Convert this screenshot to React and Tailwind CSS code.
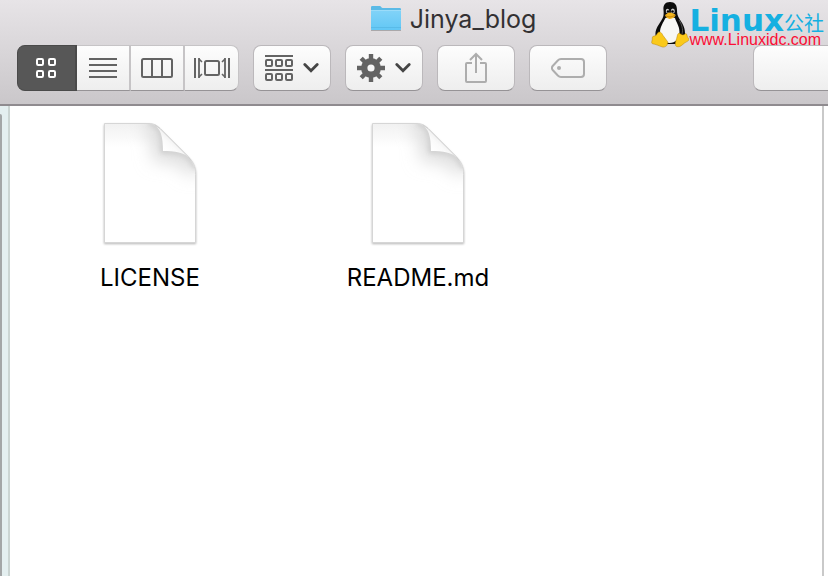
import { useState } from "react";
import clsx from "clsx";

const files = ["LICENSE", "README.md"];

const GridIcon = () => (
  <svg width="22" height="22" viewBox="0 0 22 22" fill="none" stroke="currentColor" strokeWidth="2">
    <rect x="1" y="2" width="6" height="6" rx="1.2" />
    <rect x="13" y="2" width="6" height="6" rx="1.2" />
    <rect x="1" y="14" width="6" height="6" rx="1.2" />
    <rect x="13" y="14" width="6" height="6" rx="1.2" />
  </svg>
);

const ListIcon = () => (
  <svg width="28" height="20" viewBox="0 0 28 20" fill="currentColor">
    <path d="M0 0h28v2H0zM0 6h28v2H0zM0 12h28v2H0zM0 18h28v2H0z" />
  </svg>
);

const ColumnsIcon = () => (
  <svg width="32" height="20" viewBox="0 0 32 20" fill="none" stroke="currentColor" strokeWidth="2">
    <rect x="1" y="1" width="30" height="18" rx="1.5" />
    <path d="M11 1v18M21 1v18" />
  </svg>
);

const CoverFlowIcon = () => (
  <svg width="36" height="20" viewBox="0 0 36 20" fill="none" stroke="currentColor" strokeWidth="2">
    <path d="M1 0v20M35 0v20" />
    <path d="M5 0v20M31 0v20" strokeWidth="1.800" />
    <path d="M5 1l3 3M5 19l3-3M31 1l-3 3M31 19l-3-3" strokeWidth="1.600" />
    <rect x="11" y="3" width="14" height="14" rx="1.5" />
  </svg>
);

const ArrangeIcon = () => (
  <svg width="28" height="26" viewBox="0 0 28 26" fill="none" stroke="currentColor" strokeWidth="2">
    <path d="M0 1h28M0 15h28" />
    <rect x="1" y="5" width="6" height="6" rx="1" />
    <rect x="11" y="5" width="6" height="6" rx="1" />
    <rect x="21" y="5" width="6" height="6" rx="1" />
    <rect x="1" y="19" width="6" height="6" rx="1" />
    <rect x="11" y="19" width="6" height="6" rx="1" />
    <rect x="21" y="19" width="6" height="6" rx="1" />
  </svg>
);

const GearIcon = () => (
  <svg width="28" height="28" viewBox="0 0 28 28">
    <g stroke="currentColor" strokeWidth="4.4">
      <path d="M14 0v9M14 19v9M0 14h9M19 14h9" />
      <path d="M4.2 4.2l6 6M17.8 17.8l6 6M23.8 4.2l-6 6M10.2 17.8l-6 6" />
    </g>
    <circle cx="14" cy="14" r="6.8" fill="none" stroke="currentColor" strokeWidth="6.4" />
  </svg>
);

const ChevronIcon = () => (
  <svg width="16" height="10" viewBox="0 0 16 10" fill="none" stroke="#454545" strokeWidth="2.8">
    <path d="M1.8 1.6L8 7.8l6.200-6.200" strokeLinecap="round" strokeLinejoin="miter" />
  </svg>
);

const ShareIcon = () => (
  <svg width="24" height="32" viewBox="0 0 24 32" fill="none" stroke="#adadad" strokeWidth="2">
    <path d="M8 11H3a1 1 0 0 0-1 1v17a1 1 0 0 0 1 1h18a1 1 0 0 0 1-1V12a1 1 0 0 0-1-1h-5" />
    <path d="M12 21V2M6 8l6-6 6 6" />
  </svg>
);

const TagIcon = () => (
  <svg width="34" height="20" viewBox="0 0 34 20" fill="none" stroke="#adadad" strokeWidth="2">
    <path d="M10 1h20a3 3 0 0 1 3 3v12a3 3 0 0 1-3 3H10c-1.500 0-2.300-.6-3.200-1.500L1.700 12c-1-1.200-1-2.800 0-4L6.800 2.500C7.700 1.500 8.500 1 10 1z" />
    <circle cx="8" cy="10" r="2" fill="#adadad" stroke="none" />
  </svg>
);

const FolderIcon = () => (
  <svg width="32" height="28" viewBox="0 0 32 28">
    <defs>
      <linearGradient id="folder" x1="0" y1="0" x2="0" y2="1">
        <stop offset="0" stopColor="#82d3f8" />
        <stop offset="1" stopColor="#62c7f5" />
      </linearGradient>
    </defs>
    <path d="M1 25h30v1H1z" fill="#aaa8aa" />
    <path d="M1 2.200Q1 1 2.200 1h7.600c1.200 0 1.600 2 3 2h17q1.200 0 1.200 1.200V24.500H1z" fill="#5bbae6" />
    <path d="M1 5h30v19q0 1-1 1H2q-1 0-1-1z" fill="url(#folder)" />
    <path d="M1 5.500h30" stroke="#9bdcf9" />
    <path d="M1 22.500h30" stroke="#50b2df" strokeWidth="0.600" />
  </svg>
);

const DocumentIcon = () => (
  <svg width="100" height="128" viewBox="0 0 100 128">
    <defs>
      <linearGradient id="top" x1="0" y1="0" x2="0" y2="1">
        <stop offset="0" stopColor="#f1f1f1" />
        <stop offset="0.2" stopColor="#ffffff" />
      </linearGradient>
      <linearGradient id="curl" x1="64" y1="31" x2="74" y2="20" gradientUnits="userSpaceOnUse">
        <stop offset="0" stopColor="#ffffff" />
        <stop offset="0.6" stopColor="#fafafa" />
        <stop offset="1" stopColor="#efefef" />
      </linearGradient>
      <clipPath id="page">
        <path d="M5 4h43c6 0 9 2 12 5l28 28c5 5 7 10 7 18v67H5z" />
      </clipPath>
      <filter id="soft" x="-10%" y="-10%" width="120%" height="120%">
        <feGaussianBlur stdDeviation="0.9" />
      </filter>
      <filter id="softest" x="-60%" y="-60%" width="220%" height="220%">
        <feGaussianBlur stdDeviation="9" />
      </filter>
      <filter id="softer" x="-40%" y="-40%" width="180%" height="180%">
        <feGaussianBlur stdDeviation="2.500" />
      </filter>
    </defs>
    <path d="M4.500 5H48c6 0 9 2 12 5l28 28c5 5 7.500 10 7.500 18v67.500h-91z" fill="#c4c4c4" stroke="#a8a8a8" filter="url(#soft)" />
    <path d="M4.500 3.500H48c6 0 9 2 12 5l28 28c5 5 7.500 10 7.500 18v68h-91z" fill="url(#top)" stroke="#d6d6d6" />
    <g clipPath="url(#page)" fill="none">
      <path d="M46 3C58 4 62 14 62 32c18 0 29 5 34 20" stroke="#dadada" strokeWidth="18" filter="url(#softest)" />
      <path d="M49 3C60 5 63 14 63 31c18 0 27 4 33 18" stroke="#cacaca" strokeWidth="4" filter="url(#softer)" />
    </g>
    <path d="M53 4.500C61 8 63 17 63 31c12 0 21 1 28 8L60 8.500z" fill="url(#curl)" />
    <path d="M55 5l5 3.500 28 28 3 4" fill="none" stroke="#d0d0d0" />
  </svg>
);

const Penguin = () => (
  <svg width="38" height="48" viewBox="0 0 38 48">
    <path d="M19 2c-5 0-7 3.500-6.500 8 .4 5 .2 7-2.500 11-3 4.500-6 9-5.500 14 .3 5 5 8 9 9h12c5-1 8.500-5 8.500-11 0-6-3-10-5.500-14-2-3.500-2.500-5-2.500-9C26 5 24 2 19 2z" fill="#0b0b0b" />
    <path d="M14.500 18c-2 4-5.500 9-5.500 14 0 6 4 11 9.500 11 6 0 10-4.500 10-11 0-6-3.500-10-4.500-14-2-1-7-1-9.500 0z" fill="#f7f7f5" />
    <path d="M28 20c2.500 4 4.500 9 3 14" fill="none" stroke="#777" strokeWidth="0.700" />
    <ellipse cx="16.500" cy="11" rx="1.700" ry="2.300" fill="#ccc" />
    <ellipse cx="21.800" cy="11" rx="2" ry="2.500" fill="#ccc" />
    <circle cx="17" cy="11.500" r="1.200" />
    <circle cx="21.500" cy="11.500" r="1.300" />
    <path d="M14 15c2-1.500 3.500-3 5.500-2.500 2 .4 3.500 1.300 5 2.300.6 1.700-3 4-5.500 4.200-2 0-5-2.500-5-4z" fill="#f5b51b" />
    <path d="M14.500 15.500c3 2 6 2 9.500-.5" fill="none" stroke="#a86e08" strokeWidth="0.700" />
    <path d="M7 32.500c2-1.500 3.500 0 5 3l4.500 6c1 3-1.500 6-5 5.500C8 46 4.500 44 1.500 43.800c-2-1 .3-3.500-.2-6 0-2.500 3.500-1 4.200-3z" fill="#fac91b" stroke="#b98508" strokeWidth="0.500" />
    <path d="M26.500 35c.5-2 2-2 3-1 2 1.500 4 1 5-.5 2 0 1 3 3 5 1.500 2-1.500 3-4 4.500-2 1.500-4 4-6.500 3.800-2.500 0-3-2-2.500-4.500.8-2.500 1.500-5 2-7.300z" fill="#fac91b" stroke="#b98508" strokeWidth="0.500" />
  </svg>
);

const views = [
  { name: "Icons", icon: <GridIcon />, width: "w-[60px]" },
  { name: "List", icon: <ListIcon />, width: "w-[54px]" },
  { name: "Columns", icon: <ColumnsIcon />, width: "w-[54px]" },
  { name: "Cover Flow", icon: <CoverFlowIcon />, width: "w-[54px]" },
];

const ToolButton = ({ label, children }) => (
  <button
    type="button"
    aria-label={label}
    className="flex h-[46px] w-[78px] shrink-0 items-center justify-center gap-2.5 rounded-lg border border-[#bbb8bb] border-b-[#969396] bg-linear-to-b from-[#fdfdfd] to-[#eeeeee] text-[#636363]"
  >
    {children}
  </button>
);

const Brand = () => (
  <div className="absolute top-0 right-1 flex">
    <Penguin />
    <div className="flex flex-col pt-2 whitespace-nowrap">
      <div className="flex h-6 items-baseline leading-6 text-[#15b0e1]">
        <span className="font-['DejaVu_Sans',sans-serif] text-[31px] leading-6 font-bold">Linux</span>
        <span className="font-['Noto_Sans_CJK_SC',sans-serif] text-xl leading-6">公社</span>
      </div>
      <span className="font-['Liberation_Sans',sans-serif] text-base leading-4 text-[#fb0d35]">
        www.Linuxidc.com
      </span>
    </div>
  </div>
);

const App = () => {
  const [view, setView] = useState("Icons");
  const [search, setSearch] = useState("");

  return (
    <div className="flex min-h-screen flex-col overflow-hidden bg-white font-['Inter',sans-serif]">
      <header className="relative border-b-2 border-[#8f8b8f] bg-linear-to-b from-[#e7e4e7] to-[#cac7ca] pb-[13px]">
        <div className="flex h-[45px] items-center justify-center gap-2 pt-1 pb-[11px] pl-[78px]">
          <FolderIcon />
          <h1 className="text-[25px] leading-[30px] text-[#333133]">Jinya_blog</h1>
        </div>

        <div className="flex gap-3.5 pl-[17px]">
          <div className="flex h-[46px] shrink-0">
            {views.map((item) => (
              <button
                key={item.name}
                type="button"
                aria-label={item.name}
                aria-pressed={view === item.name}
                onClick={() => setView(item.name)}
                className={clsx(
                  "flex items-center justify-center border-y border-r-2 first:rounded-l-lg first:border-l last:rounded-r-lg last:border-r",
                  item.width,
                  view === item.name
                    ? "border-[#4a4a4a] bg-[#575757] text-white"
                    : "border-[#c6c4c6] border-b-[#969396] bg-linear-to-b from-[#fdfdfd] to-[#eeeeee] text-[#636363]"
                )}
              >
                {item.icon}
              </button>
            ))}
          </div>

          <ToolButton label="Arrange">
            <ArrangeIcon />
            <ChevronIcon />
          </ToolButton>
          <ToolButton label="Action">
            <GearIcon />
            <ChevronIcon />
          </ToolButton>
          <ToolButton label="Share">
            <ShareIcon />
          </ToolButton>
          <ToolButton label="Tags">
            <TagIcon />
          </ToolButton>

          <input
            type="search"
            aria-label="Search"
            value={search}
            onChange={(e) => setSearch(e.target.value)}
            className="ml-[132px] h-[46px] min-w-0 flex-1 rounded-l-lg border border-r-0 border-[#bbb8bb] border-b-[#969396] bg-linear-to-b from-[#fdfdfd] to-[#eeeeee] px-3"
          />
        </div>

        <Brand />
      </header>

      <div className="flex flex-1">
        <div className="flex w-2.5 shrink-0 border-r-2 border-[#cbd5d3] bg-[#e4eff0] pt-2">
          <div className="w-0.5 rounded-tr-full bg-[#a3a6a7]" />
        </div>
        <main className="mr-1 flex flex-1 flex-wrap content-start border-r-2 border-[#c9c9c9] pt-3.5 pl-1.5">
          {files.map((name) => (
            <figure key={name} className="flex w-[268px] flex-col items-center gap-3.5">
              <DocumentIcon />
              <figcaption className="text-2xl text-black">{name}</figcaption>
            </figure>
          ))}
        </main>
      </div>
    </div>
  );
};

export default App;
